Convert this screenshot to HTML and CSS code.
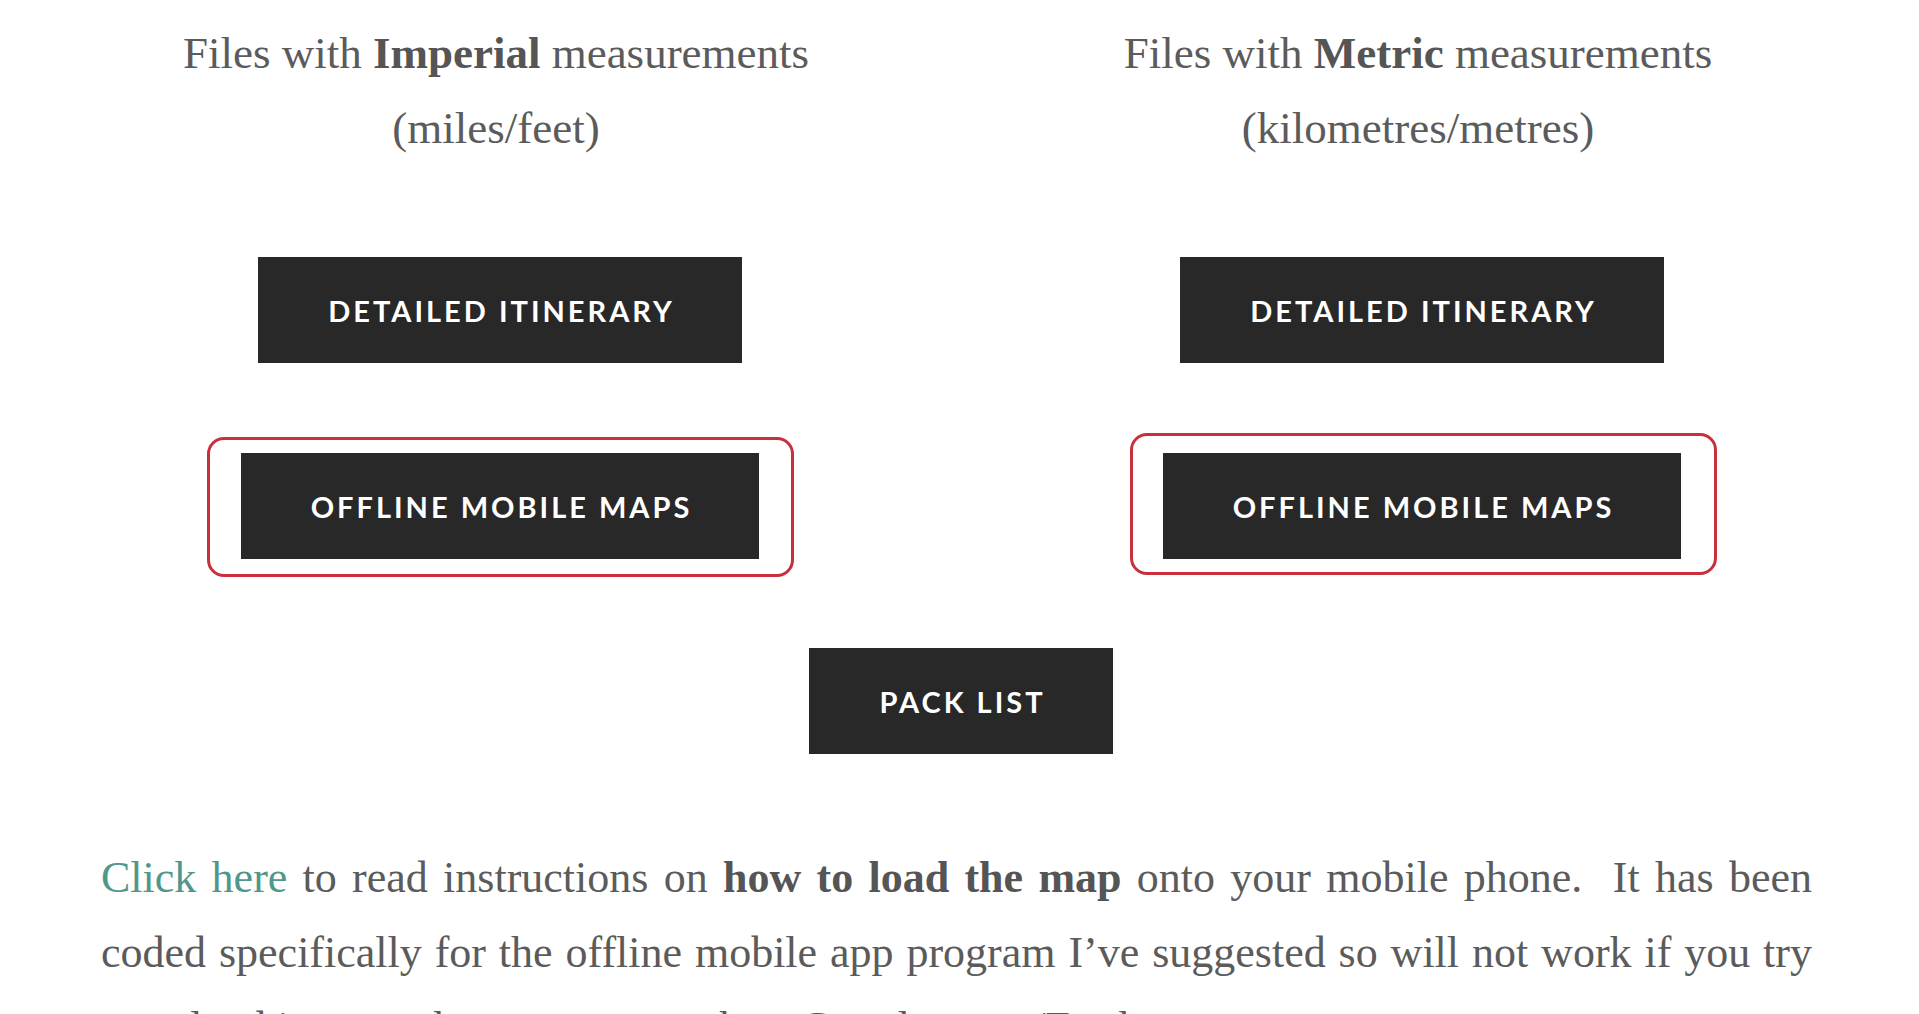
FILE: index.html
```html
<!DOCTYPE html>
<html lang="en">
<head>
<meta charset="utf-8">
<title>Downloads</title>
<link rel="stylesheet" href="styles.css">
</head>
<body>
<main class="content">
  <div class="columns">
    <section class="col">
      <p class="col-title">Files with <strong>Imperial</strong> measurements<br>(miles/feet)</p>
      <a class="btn btn-first" href="#">Detailed Itinerary</a>
      <a class="btn btn-marked" href="#">Offline Mobile Maps</a>
    </section>
    <section class="col">
      <p class="col-title">Files with <strong>Metric</strong> measurements<br>(kilometres/metres)</p>
      <a class="btn btn-first" href="#">Detailed Itinerary</a>
      <a class="btn btn-marked btn-marked-right" href="#">Offline Mobile Maps</a>
    </section>
  </div>
  <div class="center-row">
    <a class="btn" href="#">Pack List</a>
  </div>
  <p class="body-text"><a class="link" href="#">Click here</a> to read instructions on <strong>how to load the map</strong> onto your mobile phone.&nbsp; It has been coded specifically for the offline mobile app program I’ve suggested so will not work if you try to upload it to another program such as Google maps/Earth.</p>
</main>
</body>
</html>
```
FILE: styles.css
```css
html, body {
  margin: 0;
  padding: 0;
  background: #ffffff;
}

.content {
  width: 1720px;
  margin-left: 101px;
  padding-top: 16px;
  font-family: "Liberation Serif", "Times New Roman", serif;
  color: #5b5b5b;
}

.columns {
  display: grid;
  grid-template-columns: 1fr 1fr;
  column-gap: 124px;
}

.col {
  display: flex;
  flex-direction: column;
  align-items: center;
}

.col-title {
  margin: 0;
  padding-right: 8px;
  font-size: 45px;
  line-height: 75px;
  text-align: center;
}

.col-title strong {
  font-weight: 700;
  color: #555555;
}

.btn {
  display: flex;
  align-items: center;
  justify-content: center;
  height: 106px;
  padding: 0 67px 0 70px;
  box-sizing: border-box;
  background: #282828;
  color: #ffffff;
  text-decoration: none;
  text-transform: uppercase;
  font-family: Lato, "Open Sans", sans-serif;
  font-weight: 700;
  font-size: 29px;
  letter-spacing: 3px;
}

.btn-first {
  margin-top: 91px;
}

.btn-marked {
  position: relative;
  margin-top: 90px;
}

.btn-marked::before {
  content: "";
  position: absolute;
  top: -16px;
  bottom: -18px;
  left: -34px;
  right: -35px;
  border: 3px solid #c8313b;
  border-radius: 17px;
  pointer-events: none;
}

.btn-marked-right::before {
  top: -20px;
  bottom: -16px;
  left: -33px;
  right: -36px;
}

.center-row {
  display: flex;
  justify-content: center;
  margin-top: 89px;
}

.body-text {
  margin: 86px 0 0;
  padding-right: 9px;
  font-size: 44px;
  line-height: 75px;
  text-align: justify;
}

.body-text strong {
  font-weight: 700;
  color: #555555;
}

.link {
  color: #4f978d;
  text-decoration: none;
}
```
